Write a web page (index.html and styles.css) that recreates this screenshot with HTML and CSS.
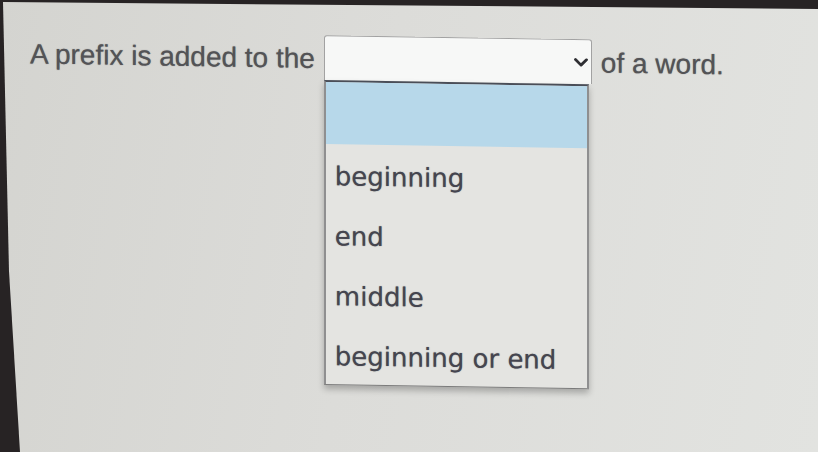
FILE: index.html
```html
<!DOCTYPE html>
<html lang="en">
<head>
    <meta charset="UTF-8">
    <meta name="viewport" content="width=device-width, initial-scale=1.0">
    <title>Prefix Question</title>
    <link rel="stylesheet" href="styles.css">
</head>
<body>
    <div class="screen">
        <div class="content">
            <div class="question">
                <span class="text">A prefix is added to the</span>
                <div class="dropdown">
                    <div class="dropdown-box">
                        <svg class="chevron" width="14" height="9" viewBox="0 0 14 9">
                            <polyline points="1.5,1.5 7,7 12.5,1.5" fill="none" stroke="#2f2f33" stroke-width="2.8" stroke-linecap="round" stroke-linejoin="round"/>
                        </svg>
                    </div>
                    <ul class="options">
                        <li class="option selected"></li>
                        <li class="option">beginning</li>
                        <li class="option">end</li>
                        <li class="option">middle</li>
                        <li class="option">beginning or end</li>
                    </ul>
                </div>
                <span class="text">of a word.</span>
            </div>
        </div>
    </div>
</body>
</html>
```

FILE: styles.css
```css
* {
    box-sizing: border-box;
}

body {
    margin: 0;
    height: 100vh;
    overflow: hidden;
    background-color: #272324;
}

.screen {
    height: 100vh;
    background: linear-gradient(100deg, #d4d4d0 0%, #dcdcd9 45%, #e2e3e0 100%);
    clip-path: polygon(3px 2px, 100% 9px, 100% 100%, 20px 100%, 9px 60%);
}

/* the screen is seen slightly at an angle */
.content {
    padding: 30px 0 0 30px;
    transform: skewY(0.9deg);
    transform-origin: 0 0;
}

.question {
    display: flex;
    align-items: flex-start;
    gap: 9px;
    margin: 0;
    font-family: "Liberation Sans", Arial, sans-serif;
    font-size: 28px;
    color: #535356;
    text-shadow: 0 0 1px rgba(70, 70, 75, 0.7);
}

.text {
    line-height: 45px;
    padding-top: 1px;
    white-space: nowrap;
}

.dropdown {
    position: relative;
    flex: none;
    width: 268px;
    height: 45px;
}

.dropdown-box {
    display: flex;
    align-items: center;
    justify-content: flex-end;
    height: 45px;
    padding-right: 3px;
    border: 1px solid #a2a2a2;
    border-bottom: none;
    border-radius: 3px 3px 0 0;
    background-color: #f7f8f7;
}

.options {
    position: absolute;
    top: 45px;
    left: 0;
    width: 265px;
    margin: 0;
    padding: 0;
    list-style: none;
    border: 2px solid #8f8f90;
    border-top-color: #4a4e58;
    border-bottom-width: 1px;
    border-bottom-color: #7a7a7a;
    background-color: #e4e4e1;
    box-shadow: 0 4px 6px rgba(0, 0, 0, 0.25);
    font-family: "DejaVu Sans", Verdana, sans-serif;
    font-size: 26px;
    color: #45454f;
}

.option {
    height: 60px;
    padding: 4px 0 0 9px;
    line-height: 56px;
    white-space: nowrap;
}

.option.selected {
    height: 62px;
    background-color: #b7d8ea;
}
```
